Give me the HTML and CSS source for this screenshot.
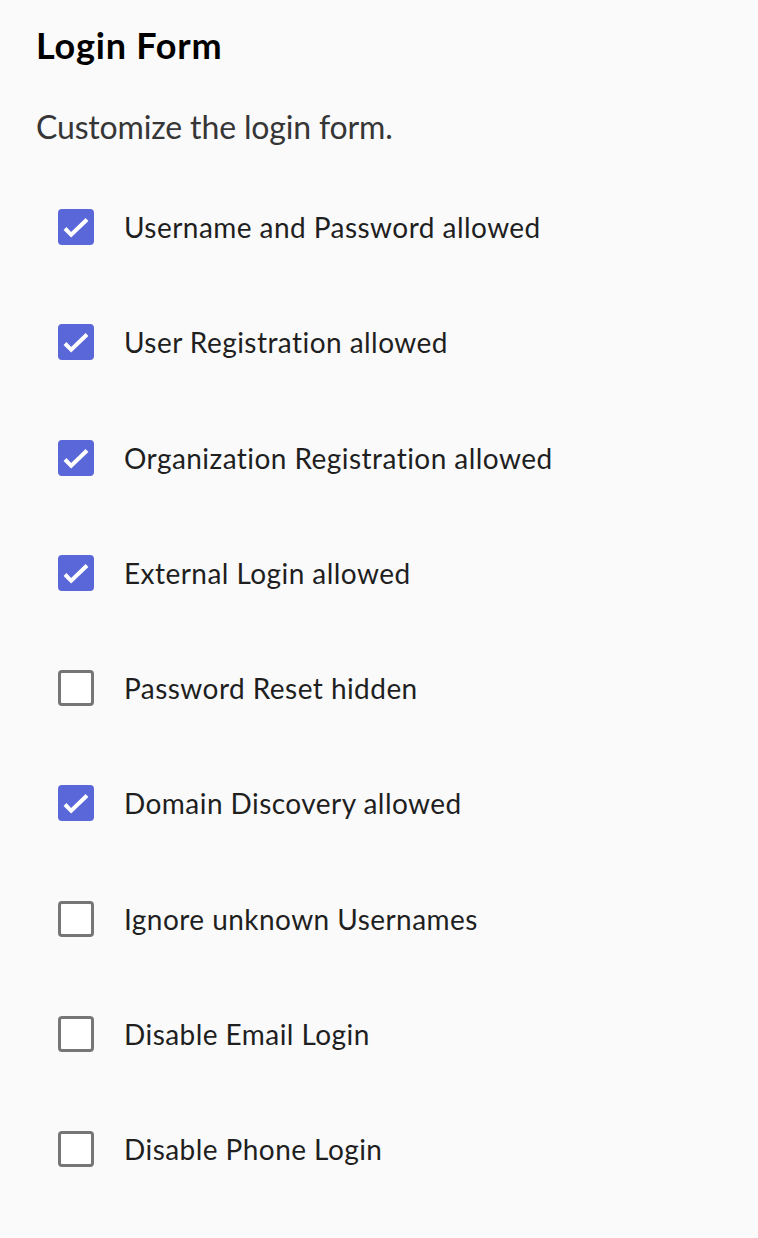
FILE: index.html
```html
<!DOCTYPE html>
<html lang="en">
<head>
<meta charset="utf-8">
<title>Login Form</title>
<link rel="stylesheet" href="styles.css">
</head>
<body>
<main class="panel">
  <h1 class="title">Login Form</h1>
  <p class="desc">Customize the login form.</p>
  <ul class="options">
    <li class="option"><span class="box checked"><svg viewBox="0 0 36 36"><path d="M7 19.5 L13.2 25.8 L29 10.5"/></svg></span><span class="label">Username and Password allowed</span></li>
    <li class="option"><span class="box checked"><svg viewBox="0 0 36 36"><path d="M7 19.5 L13.2 25.8 L29 10.5"/></svg></span><span class="label">User Registration allowed</span></li>
    <li class="option"><span class="box checked"><svg viewBox="0 0 36 36"><path d="M7 19.5 L13.2 25.8 L29 10.5"/></svg></span><span class="label">Organization Registration allowed</span></li>
    <li class="option"><span class="box checked"><svg viewBox="0 0 36 36"><path d="M7 19.5 L13.2 25.8 L29 10.5"/></svg></span><span class="label">External Login allowed</span></li>
    <li class="option"><span class="box"></span><span class="label">Password Reset hidden</span></li>
    <li class="option"><span class="box checked"><svg viewBox="0 0 36 36"><path d="M7 19.5 L13.2 25.8 L29 10.5"/></svg></span><span class="label">Domain Discovery allowed</span></li>
    <li class="option"><span class="box"></span><span class="label">Ignore unknown Usernames</span></li>
    <li class="option"><span class="box"></span><span class="label">Disable Email Login</span></li>
    <li class="option"><span class="box"></span><span class="label">Disable Phone Login</span></li>
  </ul>
</main>
</body>
</html>
```

FILE: styles.css
```css
html, body {
  margin: 0;
  padding: 0;
  background: #fafafa;
}
body {
  font-family: Lato, "Open Sans", sans-serif;
  color: #1f1f1f;
  font-variant-ligatures: none;
  font-feature-settings: "liga" 0;
}
.panel {
  padding: 21px 36px 40px 36px;
}
.title {
  margin: 0;
  font-size: 36px;
  line-height: 48px;
  font-weight: 700;
  letter-spacing: 0.8px;
  color: #000;
}
.desc {
  margin: 38px 0 0 0;
  font-size: 32px;
  line-height: 40px;
  letter-spacing: -0.15px;
  color: #363636;
}
.options {
  list-style: none;
  margin: 62px 0 0 0;
  padding: 0 0 0 22px;
  display: flex;
  flex-direction: column;
  gap: 79.25px;
}
.option {
  display: flex;
  align-items: center;
  gap: 30px;
  height: 36px;
}
.box {
  box-sizing: border-box;
  width: 36px;
  height: 36px;
  flex: none;
  border: 3px solid #767676;
  border-radius: 4px;
  background: #fff;
}
.box.checked {
  border: none;
  background: #5a67d8;
}
.box svg {
  display: block;
  width: 36px;
  height: 36px;
  fill: none;
  stroke: #fff;
  stroke-width: 4;
}
.label {
  font-size: 28px;
  line-height: 34px;
  letter-spacing: 0.45px;
  color: #1f1f1f;
}
```
